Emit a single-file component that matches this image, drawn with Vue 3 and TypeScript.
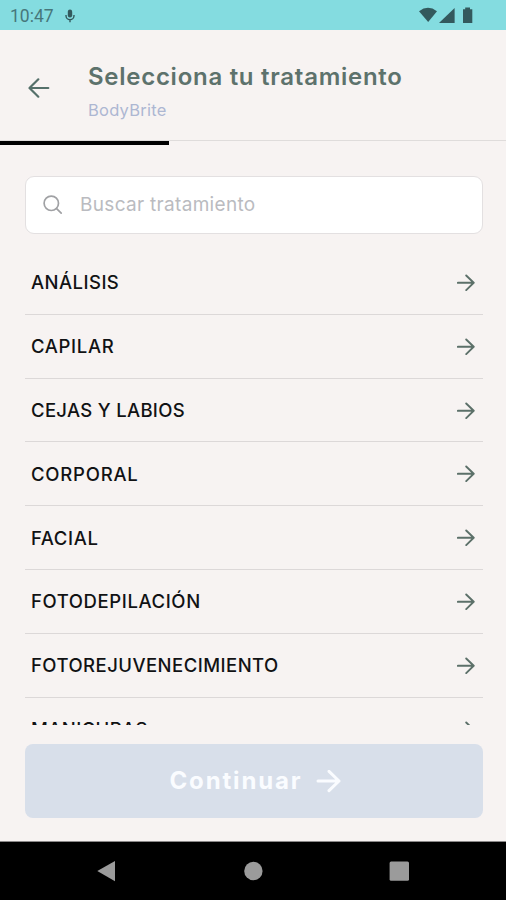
<script setup lang="ts">
interface Treatment {
  name: string
  tracking: number
}

const treatments: Treatment[] = [
  { name: 'ANÁLISIS', tracking: 0.45 },
  { name: 'CAPILAR', tracking: 0.65 },
  { name: 'CEJAS Y LABIOS', tracking: 0.31 },
  { name: 'CORPORAL', tracking: 0.78 },
  { name: 'FACIAL', tracking: 0.6 },
  { name: 'FOTODEPILACIÓN', tracking: 0.6 },
  { name: 'FOTOREJUVENECIMIENTO', tracking: 0.46 },
  { name: 'MANICURAS', tracking: 0.4 },
]
</script>

<template>
  <div class="screen">
    <div class="status">
      <span class="clock">10:47</span>
      <svg class="mic" width="10" height="14" viewBox="0 0 10 14">
        <rect x="2.8" y="0.5" width="4.4" height="8" rx="2.2" fill="#33595d" />
        <path d="M1 6v.8a4 4 0 0 0 8 0V6M5 10.5v2.7" fill="none" stroke="#33595d" stroke-width="1.4" />
      </svg>
      <svg class="signals" width="56" height="18" viewBox="0 0 56 18">
        <path d="M0 5.2Q9 -1.6 18 5.2L9.2 16Z" />
        <path d="M35.6 2v15H20Z" />
        <path d="M44 3.2h2.2V1.6h4.8v1.6h2.3v13.8h-9.3Z" />
      </svg>
    </div>

    <header class="header">
      <svg class="back" width="22" height="20" viewBox="0 0 22 20">
        <path d="M20.3 10H1.8M10.3 1.3L1.5 10l8.8 8.7" />
      </svg>
      <div class="titles">
        <h1>Selecciona tu tratamiento</h1>
        <p>BodyBrite</p>
      </div>
    </header>
    <div class="progress"><div class="bar"></div></div>

    <div class="search">
      <svg width="20" height="20" viewBox="0 0 20 20">
        <circle cx="8.3" cy="8.3" r="7.2" />
        <path d="M13.6 13.6l4.6 4.6" />
      </svg>
      <span>Buscar tratamiento</span>
    </div>

    <div class="list">
      <div v-for="t in treatments" :key="t.name" class="row">
        <span :style="{ letterSpacing: t.tracking + 'px' }">{{ t.name }}</span>
        <svg width="18" height="17" viewBox="0 0 18 17">
          <path d="M0.8 8.8h16M9.2 1.5l7.5 7.3-7.5 7.3" />
        </svg>
      </div>
    </div>

    <div class="action">
      <span>Continuar</span>
      <svg width="25" height="23" viewBox="0 0 25 23">
        <path d="M2 11h21M13 1.3l10 9.7-10 9.7" />
      </svg>
    </div>

    <nav class="nav">
      <svg width="20" height="22" viewBox="0 0 20 22"><path d="M0.3 11L18 1v20.2Z" /></svg>
      <svg width="20" height="20" viewBox="0 0 20 20"><circle cx="10.4" cy="10" r="9.2" /></svg>
      <svg width="20" height="20" viewBox="0 0 20 20"><rect x="0.6" y="0.5" width="19.4" height="19.2" rx="1.5" /></svg>
    </nav>
  </div>
</template>

<style>
body {
  background: #f7f3f2;
}
</style>

<style scoped>
.screen {
  width: 506px;
  height: 900px;
  overflow: hidden;
  display: flex;
  flex-direction: column;
  background: #f7f3f2;
  font-family: Inter, "Liberation Sans", sans-serif;
}
.status {
  height: 30px;
  flex: none;
  box-sizing: border-box;
  padding: 0 31px 0 10px;
  display: flex;
  align-items: center;
  background: #84dce0;
}
.clock {
  width: 55px;
  font: 400 17.5px/30px Roboto, sans-serif;
  color: #47777b;
  padding-top: 2px;
}
.signals {
  margin-left: auto;
  fill: #33595d;
}
.mic {
  margin-top: 2px;
}
.header {
  height: 111px;
  flex: none;
  display: flex;
  align-items: center;
  box-sizing: border-box;
  padding: 0 0 0 28px;
  border-bottom: 1px solid #dfdcdb;
}
.back {
  margin-top: 5px;
  fill: none;
  stroke: #55706a;
  stroke-width: 2.2;
  stroke-linecap: round;
  stroke-linejoin: round;
}
.titles {
  margin-left: 38px;
  padding-top: 16px;
}
h1 {
  margin: 0;
  font-size: 24px;
  line-height: 34px;
  font-weight: 600;
  letter-spacing: 0.73px;
  color: #5d726c;
  white-space: nowrap;
}
p {
  margin: 0;
  font-size: 16.5px;
  line-height: 32px;
  letter-spacing: 0.25px;
  color: #adb7d2;
}
.progress {
  height: 4px;
  flex: none;
}
.bar {
  width: 169px;
  height: 4px;
  background: #000;
}
.search {
  margin: 31px 23px 0 25px;
  height: 58px;
  flex: none;
  box-sizing: border-box;
  border: 1px solid #e3e0e1;
  border-radius: 9px;
  background: #fff;
  display: flex;
  align-items: center;
  padding-left: 17px;
}
.search svg {
  fill: none;
  stroke: #a0a1a4;
  stroke-width: 1.7;
  stroke-linecap: round;
}
.search span {
  margin: 0 0 1px 17px;
  font-size: 19px;
  letter-spacing: 0.31px;
  color: #babbc0;
}
.list {
  margin: 17px 23px 0 25px;
  height: 474px;
  flex: none;
  overflow: hidden;
}
.row {
  height: 63.82px;
  box-sizing: border-box;
  border-bottom: 1px solid #dcd8d8;
  display: flex;
  align-items: center;
  justify-content: space-between;
  padding: 0 8px 0 6px;
}
.row span {
  font-size: 18.5px;
  font-weight: 500;
  color: #111214;
  white-space: nowrap;
}
.row svg {
  fill: none;
  stroke: #5c7069;
  stroke-width: 1.9;
  stroke-linecap: round;
  stroke-linejoin: round;
}
.action {
  margin: 19px 23px 0 25px;
  height: 74px;
  flex: none;
  box-sizing: border-box;
  padding-left: 3px;
  border-radius: 8px;
  background: #d8dfea;
  display: flex;
  align-items: center;
  justify-content: center;
  gap: 14px;
  color: #fafcff;
  font-size: 24px;
  font-weight: 700;
  letter-spacing: 1.85px;
}
.action span {
  margin-bottom: 1px;
}
.action svg {
  fill: none;
  stroke: #fafcff;
  stroke-width: 3;
  stroke-linecap: round;
  stroke-linejoin: round;
}
.nav {
  margin-top: auto;
  height: 59px;
  flex: none;
  box-sizing: border-box;
  border-top: 1px solid #8b8989;
  background: #000;
  display: grid;
  grid-template-columns: repeat(3, 146px);
  justify-content: center;
  align-items: center;
  justify-items: center;
}
.nav svg {
  fill: #9b9b9b;
}
</style>
